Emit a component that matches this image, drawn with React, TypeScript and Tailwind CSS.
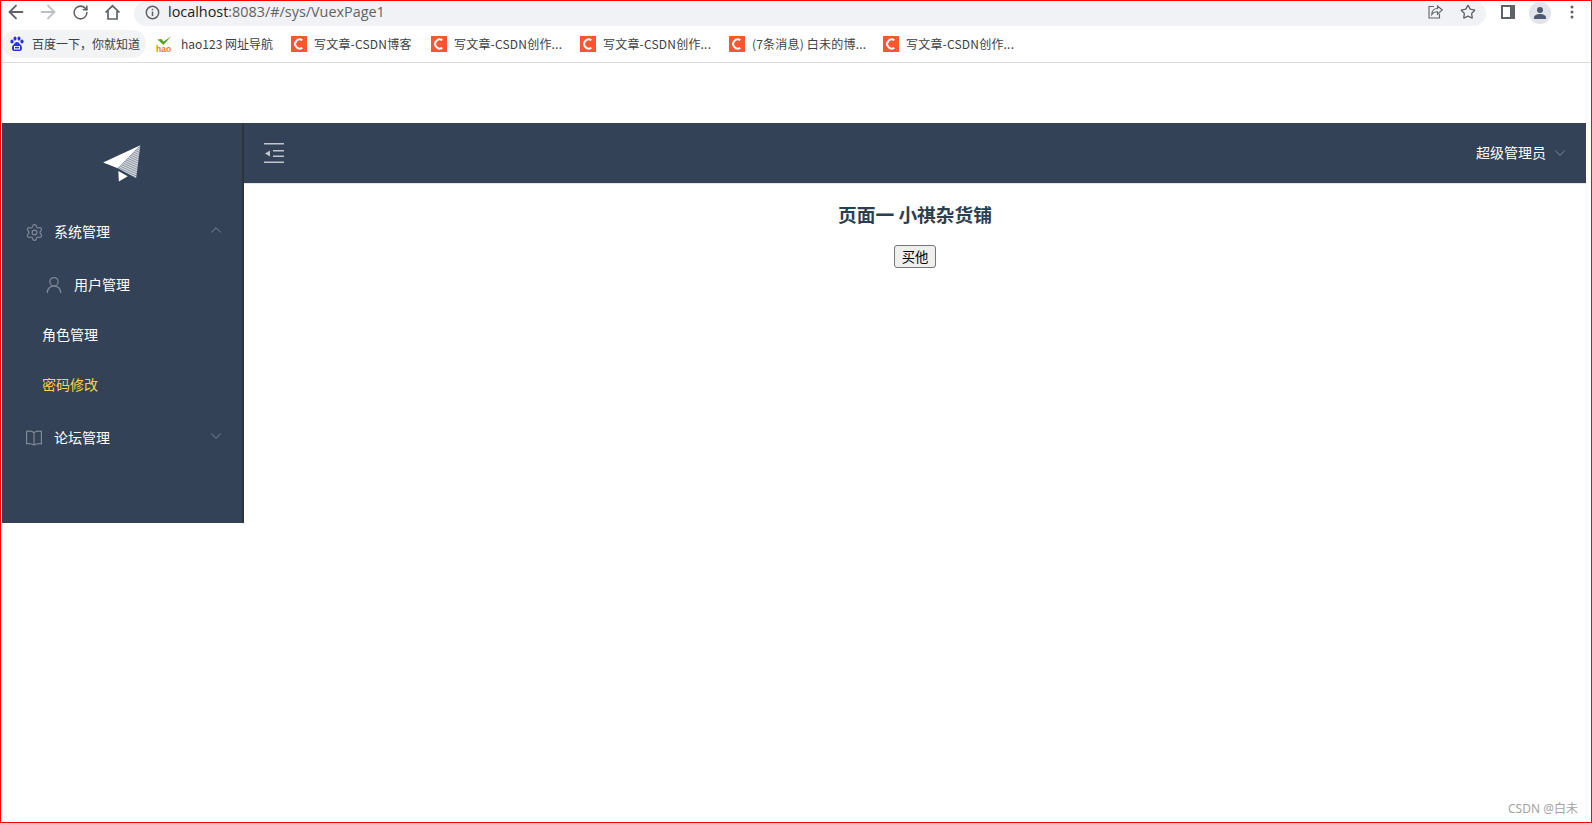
import React from "react";
import { ArrowLeft, ArrowRight, RotateCw, Star, UserRound, Settings, ChevronUp, ChevronDown } from "lucide-react";

const cjk = "font-['Noto_Sans_CJK_SC','Noto_Sans',sans-serif]";

const HomeIcon = () => (
  <svg width="17" height="17" viewBox="0 0 17 17" fill="none" stroke="#5f6368" strokeWidth="1.7">
    <path d="M1.5 8.5 8.5 1.8l7 6.7M4 7v8h9V7" />
  </svg>
);

const InfoIcon = () => (
  <svg width="15" height="15" viewBox="0 0 15 15" fill="none">
    <circle cx="7.5" cy="7.5" r="6.2" stroke="#5f6368" strokeWidth="1.5" />
    <path d="M7.5 6.6v4.4M7.5 3.8v1.5" stroke="#5f6368" strokeWidth="1.5" />
  </svg>
);

const ShareIcon = () => (
  <svg width="15" height="14" viewBox="0 0 15 14" fill="none" stroke="#5f6368" strokeWidth="1.1">
    <path d="M6 1.5H1v11.5h10.5V9" />
    <path d="M9.5 1v2.5C6 3.5 4 6 3.8 9.5 5.2 7.5 7 6.6 9.5 6.8v2.4L14.3 5z" />
  </svg>
);

const PanelIcon = () => (
  <svg width="14" height="14" viewBox="0 0 14 14">
    <rect width="14" height="14" fill="#5f6368" />
    <rect x="2" y="2" width="7" height="10" fill="#fff" />
  </svg>
);

const AvatarIcon = () => (
  <span className="flex h-[22px] w-[22px] items-center justify-center rounded-full bg-[#e1e4ea]">
    <svg width="14" height="14" viewBox="0 0 14 14" fill="#4f5a70">
      <circle cx="7" cy="4" r="3" />
      <path d="M1 13v-1.5C1 9.3 4 8 7 8s6 1.3 6 3.5V13z" />
    </svg>
  </span>
);

const MoreIcon = () => (
  <svg width="4" height="14" viewBox="0 0 4 14" fill="#5f6368">
    <circle cx="2" cy="2" r="1.5" />
    <circle cx="2" cy="7" r="1.5" />
    <circle cx="2" cy="12" r="1.5" />
  </svg>
);

const BaiduIcon = () => (
  <svg width="16" height="16" viewBox="0 0 16 16" fill="#2932e1">
    <ellipse cx="3" cy="5.5" rx="1.6" ry="2" />
    <ellipse cx="6" cy="2.6" rx="1.5" ry="2.1" />
    <ellipse cx="10" cy="2.6" rx="1.5" ry="2.1" />
    <ellipse cx="13" cy="5.5" rx="1.6" ry="2" />
    <path d="M8 6c-2 0-2.5 2-4 3.2C2.5 10.500 2.500 15 5 15h6c2.500 0 2.500-4.500 1-5.800C10.500 8 10 6 8 6z" />
    <rect x="5" y="10" width="6" height="3.500" fill="#fff" />
    <rect x="6" y="10.800" width="4" height="1.600" fill="#2932e1" />
  </svg>
);

const HaoIcon = () => (
  <svg width="16" height="16" viewBox="0 0 16 16">
    <path d="M1.500 3.500 5.500 3 7.500 5.500 15 .5 7.500 9z" fill="#5aa51d" />
    <text x="0" y="15.500" fontSize="8.500" fontWeight="700" fill="#ef7d15" fontFamily="Liberation Sans">hao</text>
  </svg>
);

const CsdnIcon = () => (
  <svg width="16" height="16" viewBox="0 0 16 16" fill="none">
    <rect width="16" height="16" fill="#fc5531" />
    <path d="M11.300 4.300A4.500 4.500 0 1 0 11.300 11.700" stroke="#fff" strokeWidth="2" />
  </svg>
);

const PlaneLogo = () => (
  <svg width="42" height="42" viewBox="0 0 40 40">
    <defs>
      <pattern id="hatch" width="1.600" height="1.600" patternUnits="userSpaceOnUse" patternTransform="rotate(70)">
        <rect width="1.600" height="1.600" fill="#8b95a3" />
        <rect width="0.700" height="1.600" fill="#e8ebef" />
      </pattern>
    </defs>
    <path d="M37.500 3 2 19.500l14 5.500z" fill="#fff" />
    <path d="M37.500 3 16 25l17.500 9.500z" fill="url(#hatch)" />
    <path d="M16.500 27.500 25.500 32.500l-8.500 5z" fill="#fff" />
  </svg>
);

const FoldIcon = () => (
  <svg width="20" height="20" viewBox="0 0 20 20" fill="#c0c4cc">
    <rect y="0" width="20" height="1.500" />
    <rect x="9" y="7" width="11" height="1.500" />
    <rect x="9" y="12.500" width="11" height="1.500" />
    <rect y="18.500" width="20" height="1.500" />
    <path d="M1 10.500 6 7.500v6z" />
  </svg>
);

const BookIcon = () => (
  <svg width="16" height="16" viewBox="0 0 16 16" fill="none" stroke="#7f8998" strokeWidth="1.200">
    <path d="M8 2.500C6 1.300 3 1 .6 1.300v12.400C3 13.400 6 13.700 8 15c2-1.300 5-1.600 7.400-1.300V1.300C13 1 10 1.300 8 2.500zM8 2.500V15" />
  </svg>
);

const bookmarks = [
  { text: "写文章-CSDN博客", width: "w-[140px]" },
  { text: "写文章-CSDN创作...", width: "w-[149px]" },
  { text: "写文章-CSDN创作...", width: "w-[149px]" },
  { text: "(7条消息) 白未的博...", width: "w-[154px]" },
  { text: "写文章-CSDN创作...", width: "w-[140px]" },
];

function BrowserBar() {
  return (
    <>
      <div className="flex h-[25px] items-center pr-[4px]">
        <div className="mb-[3px] flex w-[30px] justify-center"><ArrowLeft size={22} color="#5f6368" strokeWidth={2} /></div>
        <div className="mb-[3px] flex w-[33px] justify-center"><ArrowRight size={22} color="#bdc1c6" strokeWidth={2} /></div>
        <div className="mb-[3px] flex w-[33px] justify-center"><RotateCw size={17} color="#5f6368" strokeWidth={2.200} /></div>
        <div className="mb-[3px] flex w-[31px] justify-center"><HomeIcon /></div>
        <div className="ml-[6px] flex h-full w-[1352px] items-center rounded-[13px] bg-[#f0f2f5] pb-[3px] pl-[11px]">
          <InfoIcon />
          <span className="ml-[8px] text-[14.400px] text-[#5f6368] font-['Open_Sans',sans-serif]">
            <span className="text-[#202124]">localhost</span>:8083/#/sys/VuexPage1
          </span>
          <span className="ml-auto"><ShareIcon /></span>
          <span className="ml-[17px] mr-[10px]"><Star size={16} color="#5f6368" strokeWidth={2} /></span>
        </div>
        <span className="mb-[3px] ml-[15px]"><PanelIcon /></span>
        <span className="mb-[2px] ml-[14px]"><AvatarIcon /></span>
        <span className="mb-[3px] ml-[19px]"><MoreIcon /></span>
      </div>
      <div className={`flex h-[37px] items-center border-b border-[#dcdcdc] pb-px text-[12px] text-[#3c4043] ${cjk}`}>
        <div className="ml-px flex h-[28px] w-[144px] items-center rounded-[14px] bg-[#f1f3f4] pl-[7px]">
          <BaiduIcon />
          <span className="ml-[7px] whitespace-nowrap">百度一下，你就知道</span>
        </div>
        <div className="ml-[10px] flex w-[135px] items-center">
          <HaoIcon />
          <span className="ml-[9px] whitespace-nowrap">hao123 网址导航</span>
        </div>
        {bookmarks.map((b, i) => (
          <div key={i} className={`flex items-center ${b.width}`}>
            <CsdnIcon />
            <span className="ml-[7px] whitespace-nowrap tracking-[0.2px]">{b.text}</span>
          </div>
        ))}
      </div>
    </>
  );
}

function Sidebar() {
  return (
    <aside className={`flex h-[400px] w-[242px] flex-col border-r-2 border-[#333] bg-[#334257] text-[14px] text-white ${cjk}`}>
      <div className="flex h-[81px] justify-center pt-[19px]">
        <PlaneLogo />
      </div>
      <div className="flex h-[56px] items-center pl-[23px] pr-[17px]">
        <Settings size={19} color="#7f8998" strokeWidth={1.500} />
        <span className="ml-[10px] mb-[2px]">系统管理</span>
        <ChevronUp size={18} color="#7e8896" strokeWidth={1.300} className="ml-auto mb-[4px]" />
      </div>
      <div className="flex h-[50px] items-center pl-[42px]">
        <UserRound size={20} color="#7f8998" strokeWidth={1.500} />
        <span className="ml-[10px] mb-[2px]">用户管理</span>
      </div>
      <div className="flex h-[50px] items-center pl-[40px] pb-[2px]">角色管理</div>
      <div className="flex h-[50px] items-center pl-[40px] pb-[2px] text-[#ffd04b]">密码修改</div>
      <div className="flex h-[56px] items-center pl-[24px] pr-[17px]">
        <BookIcon />
        <span className="ml-[12px] mb-[2px]">论坛管理</span>
        <ChevronDown size={18} color="#7e8896" strokeWidth={1.300} className="ml-auto mb-[4px]" />
      </div>
    </aside>
  );
}

function Content() {
  return (
    <main className="flex min-w-0 flex-1 flex-col">
      <header className={`flex h-[61px] items-center justify-between border-b border-[#e6e6e6] bg-[#334257] pl-[20px] pr-[17px] text-[14px] text-white ${cjk}`}>
        <FoldIcon />
        <div className="flex items-center">
          <span className="mb-[2px]">超级管理员</span>
          <ChevronDown size={18} color="#7e8896" strokeWidth={1.300} className="ml-[5px]" />
        </div>
      </header>
      <div className="flex flex-col items-center">
        <h3 className={`mt-[17px] text-[18.720px] leading-[26px] font-bold text-[#2c3e50] ${cjk}`}>页面一 小祺杂货铺</h3>
        <button className={`mt-[18px] h-[23px] w-[42px] rounded-[3px] border border-[#767676] bg-[#efefef] text-[13.330px] leading-none text-black ${cjk}`}>买他</button>
      </div>
    </main>
  );
}

export default function App() {
  return (
    <div className="flex h-[823px] w-[1592px] flex-col overflow-hidden border border-[#f00] bg-white">
      <BrowserBar />
      <div className="mt-[60px] flex pl-px pr-[5px]">
        <Sidebar />
        <Content />
      </div>
      <div className="mt-auto mb-[5px] pr-[13px] text-right text-[12px] leading-[16px] text-[#a3a3a3] font-['Noto_Sans','Noto_Sans_CJK_SC',sans-serif]">
        CSDN @白未
      </div>
    </div>
  );
}
